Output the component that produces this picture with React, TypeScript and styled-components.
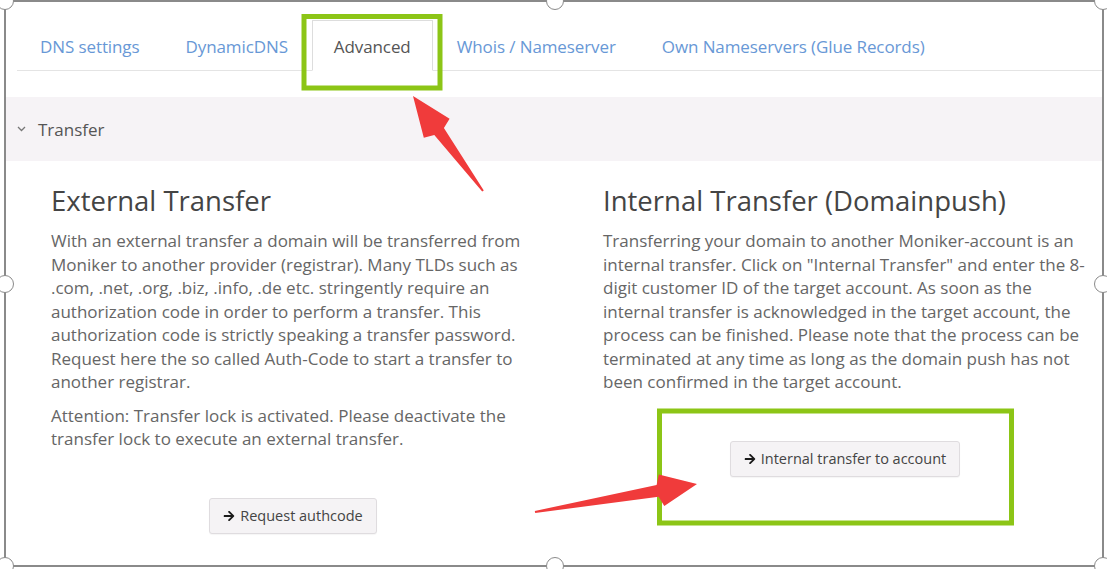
import React from 'react';
import styled, { createGlobalStyle } from 'styled-components';
import { FaArrowRight } from 'react-icons/fa';

const Global = createGlobalStyle`
  html, body { margin: 0; padding: 0; background: #ffffff; }
  body { font-family: "Open Sans", "Liberation Sans", Arial, sans-serif; }
  * { box-sizing: border-box; }
`;

const Page = styled.div`
  position: relative;
  width: 1107px;
  height: 569px;
  overflow: hidden;
  padding: 0 3px 0 4px;
  background: #fff;
`;

const Frame = styled.div`
  height: 567px;
  border: 2px solid #8a8a8a;
  padding-top: 18px;
  overflow: hidden;
`;

const TabBar = styled.ul`
  display: flex;
  list-style: none;
  margin: 0 0 0 11px;
  padding: 0 0 0 1px;
  border-bottom: 1px solid #e4e4e4;
`;

const Tab = styled.li<{ $active?: boolean }>`
  height: 51px;
  padding: 2px 21px 0;
  margin-right: 2px;
  display: flex;
  align-items: center;
  font-size: 17px;
  letter-spacing: -0.1px;
  color: ${p => (p.$active ? '#555555' : '#6898d6')};
  border: 1px solid ${p => (p.$active ? '#dddddd' : 'transparent')};
  border-bottom-color: ${p => (p.$active ? '#ffffff' : 'transparent')};
  background: ${p => (p.$active ? '#ffffff' : 'transparent')};
  margin-bottom: -1px;
  white-space: nowrap;
`;

const Band = styled.div`
  margin-top: 26px;
  height: 64px;
  background: #f6f3f6;
  display: flex;
  align-items: center;
  gap: 12px;
  padding-left: 11px;
  font-size: 17px;
  color: #555;
`;

const Body = styled.div`
  display: grid;
  grid-template-columns: 484px 484px;
  column-gap: 68px;
  padding: 23px 0 0 45px;
`;

const Column = styled.section`
  display: flex;
  flex-direction: column;
`;

const Heading = styled.h2`
  margin: 0 0 11px;
  font-size: 27.5px;
  line-height: 34px;
  font-weight: 400;
  color: #444;
  white-space: nowrap;
`;

const Para = styled.p`
  margin: 0;
  font-size: 17px;
  line-height: 23.5px;
  color: #666;
  & + & { margin-top: 10px; }
`;

const ButtonRow = styled.div`
  margin-top: 47px;
  display: flex;
  justify-content: center;
`;

const Button = styled.button`
  height: 36px;
  padding: 0 13px;
  display: inline-flex;
  align-items: center;
  gap: 5px;
  font-family: "Open Sans", "Liberation Sans", Arial, sans-serif;
  font-size: 14.5px;
  color: #444;
  background: #f5f3f5;
  border: 1px solid #dfdcdf;
  border-radius: 3px;
  box-shadow: 0 1px 1px rgba(0,0,0,0.04);
  svg { color: #1a1a1a; }
`;

const Handle = styled.span<{ $x: number; $y: number }>`
  position: absolute;
  left: ${p => p.$x - 9}px;
  top: ${p => p.$y - 9}px;
  width: 18px;
  height: 18px;
  border-radius: 50%;
  background: #fff;
  border: 1.5px solid #8a8a8a;
`;

const Overlay = styled.svg`
  position: absolute;
  left: 0;
  top: 0;
  pointer-events: none;
`;

const Chevron = () => (
  <svg width="9" height="6" viewBox="0 0 9 6">
    <polyline points="1,1 4.5,4.5 8,1" fill="none" stroke="#777" strokeWidth="1.3" />
  </svg>
);

function arrowPoints(tx: number, ty: number, hx: number, hy: number, headLen: number, headHalf: number, neckHalf: number, tailHalf: number) {
  const dx = hx - tx;
  const dy = hy - ty;
  const len = Math.hypot(dx, dy);
  const ux = dx / len;
  const uy = dy / len;
  const nx = -uy;
  const ny = ux;
  const bx = hx - headLen * ux;
  const by = hy - headLen * uy;
  const kx = bx - 4 * ux;
  const ky = by - 4 * uy;
  const pts = [
    [hx, hy],
    [bx + headHalf * nx, by + headHalf * ny],
    [kx + neckHalf * nx, ky + neckHalf * ny],
    [tx + tailHalf * nx, ty + tailHalf * ny],
    [tx - tailHalf * nx, ty - tailHalf * ny],
    [kx - neckHalf * nx, ky - neckHalf * ny],
    [bx - headHalf * nx, by - headHalf * ny],
  ];
  return pts.map(p => `${p[0].toFixed(1)},${p[1].toFixed(1)}`).join(' ');
}

const tabs = ['DNS settings', 'DynamicDNS', 'Advanced', 'Whois / Nameserver', 'Own Nameservers (Glue Records)'];

const handles: [number, number][] = [
  [5, 1], [555, 1], [1103, 1],
  [5, 284], [1103, 284],
  [5, 566], [555, 566], [1103, 566],
];

export default function App() {
  return (
    <>
      <Global />
      <Page>
        <Frame>
          <TabBar>
            {tabs.map(t => (
              <Tab key={t} $active={t === 'Advanced'}>{t}</Tab>
            ))}
          </TabBar>
          <Band>
            <Chevron />
            <span>Transfer</span>
          </Band>
          <Body>
            <Column>
              <Heading>External Transfer</Heading>
              <Para>
                With an external transfer a domain will be transferred from Moniker to another provider (registrar). Many TLDs such as .com, .net, .org, .biz, .info, .de etc. stringently require an authorization code in order to perform a transfer. This authorization code is strictly speaking a transfer password. Request here the so called Auth-Code to start a transfer to another registrar.
              </Para>
              <Para>
                Attention: Transfer lock is activated. Please deactivate the transfer lock to execute an external transfer.
              </Para>
              <ButtonRow>
                <Button><FaArrowRight size={12} />Request authcode</Button>
              </ButtonRow>
            </Column>
            <Column>
              <Heading>Internal Transfer (Domainpush)</Heading>
              <Para>
                Transferring your domain to another Moniker-account is an internal transfer. Click on "Internal Transfer" and enter the 8-digit customer ID of the target account. As soon as the internal transfer is acknowledged in the target account, the process can be finished. Please note that the process can be terminated at any time as long as the domain push has not been confirmed in the target account.
              </Para>
              <ButtonRow>
                <Button><FaArrowRight size={12} />Internal transfer to account</Button>
              </ButtonRow>
            </Column>
          </Body>
        </Frame>
        {handles.map(([x, y]) => (
          <Handle key={`${x}-${y}`} $x={x} $y={y} />
        ))}
        <Overlay width="1107" height="569" viewBox="0 0 1107 569">
          <rect x="304" y="16.5" width="136" height="71.5" fill="none" stroke="#8cc516" strokeWidth="5" />
          <rect x="659.5" y="411" width="352" height="112" fill="none" stroke="#8cc516" strokeWidth="5" />
          <polygon points={arrowPoints(483, 191, 413, 96, 40, 16, 6, 1)} fill="#f03b3b" />
          <polygon points={arrowPoints(535, 512, 697, 484, 36, 16, 6, 1)} fill="#f03b3b" />
        </Overlay>
      </Page>
    </>
  );
}
